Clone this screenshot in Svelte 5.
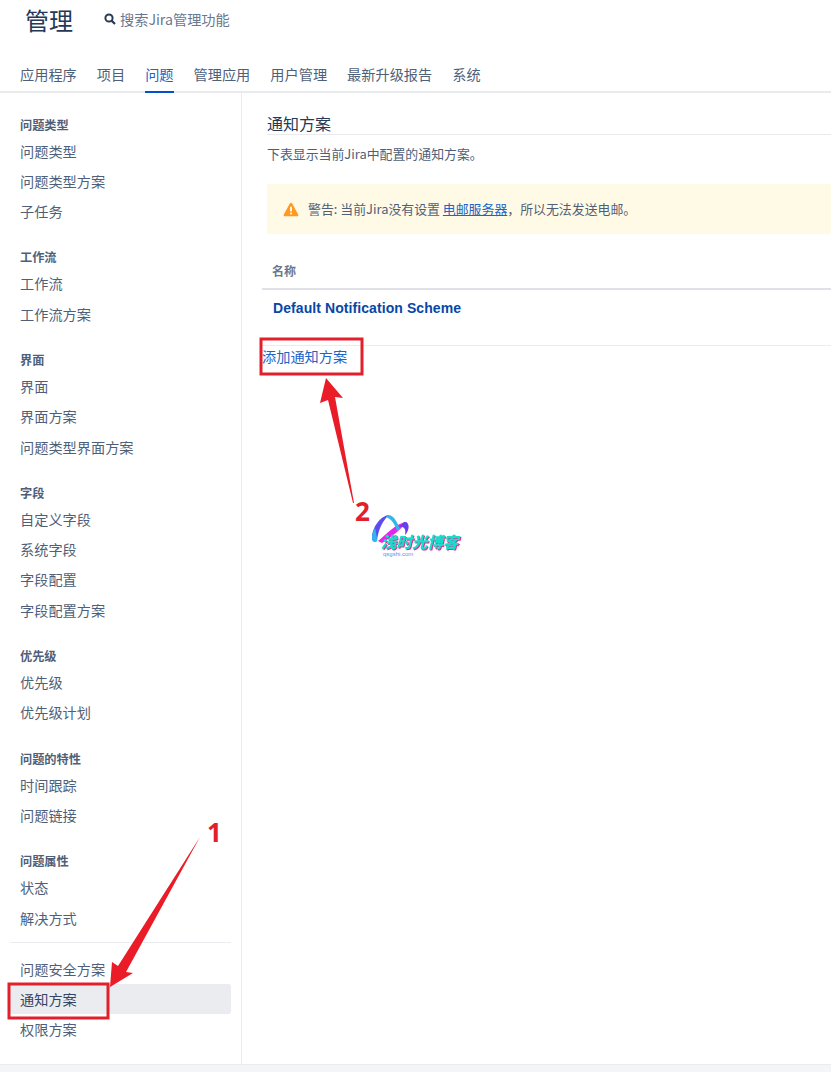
<script>
    const tabs = ["应用程序", "项目", "问题", "管理应用", "用户管理", "最新升级报告", "系统"];
    const groups = [
        { title: "问题类型", items: ["问题类型", "问题类型方案", "子任务"] },
        { title: "工作流", items: ["工作流", "工作流方案"] },
        { title: "界面", items: ["界面", "界面方案", "问题类型界面方案"] },
        { title: "字段", items: ["自定义字段", "系统字段", "字段配置", "字段配置方案"] },
        { title: "优先级", items: ["优先级", "优先级计划"] },
        { title: "问题的特性", items: ["时间跟踪", "问题链接"] },
        { title: "问题属性", items: ["状态", "解决方式"] },
    ];
    const extra = ["问题安全方案", "通知方案", "权限方案"];
</script>

<div class="page">
    <header>
        <div class="top">
            <h1>管理</h1>
            <div class="search">
                <svg width="12" height="12" viewBox="0 0 12 12">
                    <circle cx="5" cy="5" r="3.6" fill="none" stroke="#2c3a55" stroke-width="2" />
                    <path d="M7.6 7.6 L11 11" stroke="#2c3a55" stroke-width="2.2" />
                </svg>
                <span>搜索Jira管理功能</span>
            </div>
        </div>
        <nav>
            {#each tabs as tab}
                <span class="tab" class:active={tab === "问题"}>{tab}</span>
            {/each}
        </nav>
    </header>

    <div class="body">
        <aside>
            {#each groups as group}
                <section>
                    <h4>{group.title}</h4>
                    {#each group.items as item}
                        <div class="item">{item}</div>
                    {/each}
                </section>
            {/each}
            <hr />
            {#each extra as item}
                <div class="item" class:selected={item === "通知方案"}>{item}</div>
            {/each}
        </aside>

        <main>
            <h2>通知方案</h2>
            <p>下表显示当前Jira中配置的通知方案。</p>
            <div class="warning">
                <svg width="16" height="15" viewBox="0 0 16 15">
                    <path d="M8 0.8 C8.5 0.8 8.9 1 9.2 1.5 L15.2 12.4 C15.7 13.3 15.1 14.2 14.1 14.2 L1.9 14.2 C0.9 14.2 0.3 13.3 0.8 12.4 L6.8 1.5 C7.1 1 7.5 0.8 8 0.8 Z" fill="#ff991f" />
                    <rect x="7.1" y="4.4" width="1.8" height="5.2" rx="0.9" fill="#fff" />
                    <circle cx="8" cy="11.6" r="1" fill="#fff" />
                </svg>
                <span>警告: 当前Jira没有设置 <a href="#mail">电邮服务器</a>，所以无法发送电邮。</span>
            </div>
            <div class="table">
                <div class="th">名称</div>
                <div class="td"><b>Default Notification Scheme</b></div>
            </div>
            <a class="add" href="#add">添加通知方案</a>
        </main>
    </div>
    <footer></footer>

    <svg class="marks" width="831" height="1072" viewBox="0 0 831 1072">
        <rect x="261" y="339" width="101" height="35" fill="none" stroke="#e1202c" stroke-width="3" />
        <rect x="9" y="984" width="99" height="34" fill="none" stroke="#e1202c" stroke-width="3" />
        <polygon points="326,378 343,398 335,397 354,503 353,503 328,400 320,403" fill="#ea1c28" />
        <polygon points="200,837 126,972 133,973 110,987 112,962 118,966" fill="#ea1c28" />
        <text x="207" y="842" class="num">1</text>
        <text x="355" y="521" class="num">2</text>
        <path d="M372 538 C372 528 380 516 389 515 C383 520 378 530 377 541 C374 543 372 541 372 538 Z" fill="#5a4cf0" />
        <path d="M372 538 C372 534 373 531 375 528 C376 532 377 537 377 541 C374 543 372 541 372 538 Z" fill="#2fb6ee" />
        <path d="M378 541 C388 533 396 523 407 522 C403 527 392 537 382 543 Z" fill="#e924e8" />
        <path d="M388 515 C394 515 397 522 400 529 L397 531 C395 525 392 519 386 517 Z" fill="#30b8ec" />
        <path d="M404 522 C410 521 410 530 405 535 C406 530 405 526 399 527 Z" fill="#6a3cf0" />
        <text x="381" y="548" class="brand">浅时光博客</text>
        <text x="383" y="556" class="url">qsgshi.com</text>
    </svg>
</div>

<style>
    :global(body) {
        margin: 0;
        background: #fff;
    }
    .page {
        position: relative;
        width: 831px;
        height: 1072px;
        overflow: hidden;
        display: flex;
        flex-direction: column;
        font-family: "Noto Sans CJK SC", "Liberation Sans", sans-serif;
        font-size: 14.2px;
        color: #505f79;
    }
    header {
        height: 91px;
        flex: none;
        border-bottom: 2px solid #e8eaee;
    }
    .top {
        display: flex;
        align-items: center;
        padding: 2px 0 0 25px;
        height: 36px;
    }
    h1 {
        margin: 0;
        font-size: 24px;
        font-weight: 400;
        color: #253858;
        line-height: 36px;
        width: 79px;
    }
    .search {
        display: flex;
        align-items: center;
        gap: 4px;
        color: #6b778c;
        margin-top: -2px;
    }
    nav {
        display: flex;
        gap: 20px;
        padding: 25px 0 0 20px;
    }
    .tab {
        height: 30px;
        line-height: 22px;
        box-sizing: border-box;
    }
    .tab.active {
        color: #2263c7;
        border-bottom: 2px solid #0052cc;
    }
    .body {
        flex: 1;
        display: flex;
        min-height: 0;
    }
    aside {
        width: 242px;
        flex: none;
        box-sizing: border-box;
        padding: 21.5px 10px 0;
        border-right: 1px solid #ebecf0;
    }
    section {
        margin-bottom: 21px;
    }
    h4 {
        margin: 0;
        padding-left: 10px;
        font-size: 12.2px;
        line-height: 21px;
        font-weight: 700;
        color: #505f79;
    }
    .item {
        height: 30.3px;
        line-height: 30px;
        padding-left: 10px;
        border-radius: 3px;
    }
    .selected {
        background: #ebecf0;
        color: #344563;
    }
    hr {
        margin: -12px 0 11px;
        border: 0;
        border-top: 1px solid #ebecf0;
    }
    main {
        flex: 1;
        min-width: 0;
        padding: 20px 0 0 25px;
    }
    h2 {
        margin: 0;
        font-size: 16px;
        font-weight: 400;
        line-height: 21px;
        color: #253858;
        border-bottom: 1px solid #e8eaee;
    }
    p {
        margin: 8px 0 0;
        line-height: 21px;
        font-size: 12.9px;
    }
    .warning {
        margin-top: 20px;
        height: 50px;
        display: flex;
        align-items: center;
        gap: 9px;
        padding-left: 16px;
        background: #fffae6;
        font-size: 12.9px;
    }
    .warning span {
        margin-top: -1px;
    }
    .warning a {
        color: #2263c7;
    }
    .table {
        margin: 18px 0 0 -5px;
    }
    .th {
        height: 36px;
        line-height: 38px;
        padding-left: 10px;
        font-size: 12px;
        font-weight: 700;
        color: #6b778c;
        border-bottom: 2px solid #dfe1e6;
    }
    .td {
        height: 55px;
        padding-left: 11px;
        line-height: 37px;
        border-bottom: 1px solid #ebecf0;
        font-family: "Liberation Sans", sans-serif;
    }
    .td b {
        color: #0747a6;
        font-size: 14px;
        letter-spacing: 0.08px;
    }
    .add {
        display: block;
        margin: -1px 0 0 -5px;
        line-height: 22px;
        color: #2263c7;
        text-decoration: none;
    }
    footer {
        height: 7px;
        flex: none;
        background: #f4f5f7;
        border-top: 1px solid #ebecf0;
    }
    .marks {
        position: absolute;
        inset: 0;
        pointer-events: none;
    }
    .num {
        font-family: "Open Sans", sans-serif;
        font-size: 26px;
        font-weight: 700;
        fill: #e1202c;
    }
    .brand {
        font-family: "Noto Sans CJK SC", sans-serif;
        font-size: 15.5px;
        font-weight: 900;
        font-style: italic;
        fill: #12e0c8;
        filter: drop-shadow(1px 1px 0 #e030a0);
    }
    .url {
        font-family: "Liberation Sans", sans-serif;
        font-size: 6px;
        fill: #6a8cf0;
    }
</style>
